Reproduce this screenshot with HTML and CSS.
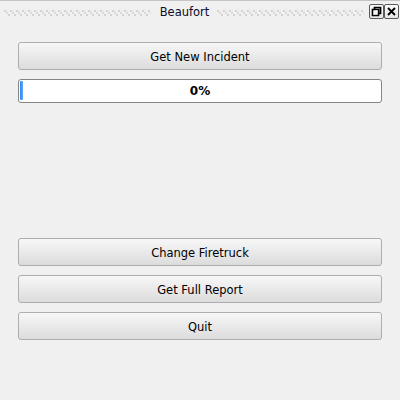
FILE: index.html
```html
<!DOCTYPE html>
<html>
<head>
<meta charset="utf-8">
<link rel="stylesheet" href="styles.css">
</head>
<body>
<div class="window">
  <div class="titlebar">
    <svg class="grip" height="6"><defs><pattern id="dots" width="6" height="6" patternUnits="userSpaceOnUse"><rect x="0" y="0" width="2" height="2" fill="#d2d2d2"/><rect x="2" y="2" width="2" height="2" fill="#dadada"/><rect x="4" y="4" width="2" height="2" fill="#d2d2d2"/><rect x="3" y="0" width="1" height="1" fill="#e2e2e2"/></pattern></defs><rect width="100%" height="6" fill="url(#dots)"/></svg>
    <span class="title">Beaufort</span>
    <svg class="grip" height="6"><rect width="100%" height="6" fill="url(#dots)"/></svg>
    <div class="wbtns">
      <div class="wbtn"><svg width="13" height="13" viewBox="0 0 13 13"><path d="M4.5 2.5h6v6h-6zM2.5 4.5h6v6h-6z" fill="none" stroke="#000" stroke-width="1.7"/><rect x="3.3" y="5.3" width="4.4" height="4.4" fill="#f4f4f4"/></svg></div>
      <div class="wbtn"><svg width="13" height="13" viewBox="0 0 13 13"><path d="M3 3l7 7M10 3l-7 7" stroke="#000" stroke-width="1.9"/></svg></div>
    </div>
  </div>
  <div class="content">
    <div class="btn">Get New Incident</div>
    <div class="progress"><div class="chunk"></div><span class="pct">0%</span></div>
    <div class="spacer"></div>
    <div class="btn">Change Firetruck</div>
    <div class="btn">Get Full Report</div>
    <div class="btn">Quit</div>
  </div>
</div>
</body>
</html>
```
FILE: styles.css
```css
html, body {
  margin: 0;
  padding: 0;
  background: #f0f0f0;
  font-family: "DejaVu Sans", sans-serif;
  font-size: 11px;
  color: #000;
}
.window {
  width: 400px;
  height: 400px;
  border-top: 1px solid #c4c4c4;
  box-sizing: border-box;
}
.titlebar {
  height: 21px;
  display: flex;
  align-items: center;
  padding-left: 4px;
}
.grip {
  flex: 1;
  display: block;
  margin-top: 2px;
}
.title {
  padding: 0 8px 0 9px;
  color: #0b0b28;
  font-size: 11.5px;
  line-height: 21px;
  padding-top: 1px;
}
.wbtns {
  display: flex;
  margin-left: 5px;
  margin-right: 1px;
  align-self: flex-start;
  margin-top: 3px;
}
.wbtn {
  width: 13px;
  height: 13px;
  border: 1px solid #5a5a5a;
  border-radius: 2px;
  background: linear-gradient(#fafafa, #e6e6e6);
  display: flex;
  align-items: center;
  justify-content: center;
}
.content {
  padding: 20px 18px 0 18px;
  display: flex;
  flex-direction: column;
  gap: 9px;
}
.btn {
  height: 26px;
  border: 1px solid #adadad;
  border-radius: 3px;
  background: linear-gradient(#f7f7f7, #dcdcdc);
  display: flex;
  align-items: center;
  justify-content: center;
  font-size: 11.5px;
  padding-top: 1px;
  box-sizing: content-box;
  height: 25px;
}
.progress {
  height: 22px;
  border: 1px solid #858585;
  border-radius: 3px;
  background: #fff;
  position: relative;
  display: flex;
  align-items: center;
  justify-content: center;
}
.chunk {
  position: absolute;
  left: 1px;
  top: 1px;
  width: 3px;
  height: 19px;
  border-radius: 1px;
  background: linear-gradient(90deg, #2f86f0, #5aa9ff);
}
.pct {
  font-weight: bold;
  font-size: 12px;
}
.spacer {
  height: 117px;
}
```
